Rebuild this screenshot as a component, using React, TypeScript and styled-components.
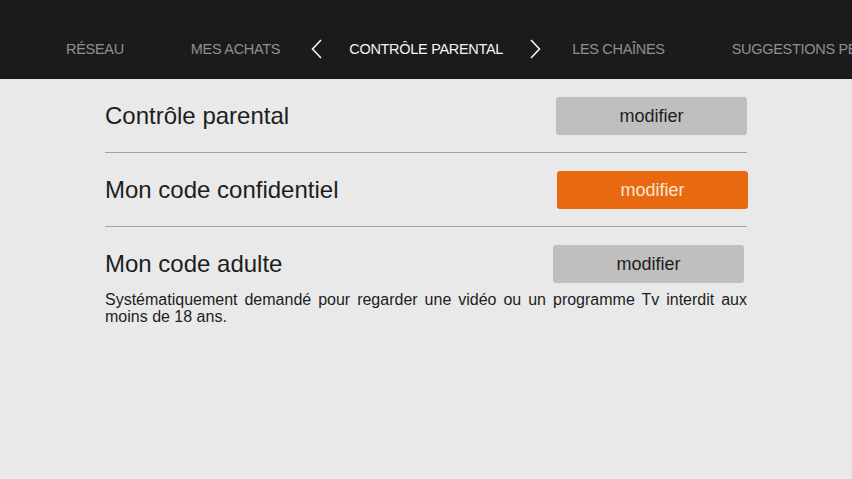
import React from 'react';
import styled, { createGlobalStyle } from 'styled-components';

const GlobalStyle = createGlobalStyle`
  html, body {
    margin: 0;
    padding: 0;
    background: #e9e9e9;
    font-family: "Liberation Sans", Arial, sans-serif;
  }
`;

const Page = styled.div`
  width: 852px;
  height: 479px;
  overflow: hidden;
  background: #e9e9e9;
`;

const TopBar = styled.nav`
  height: 79px;
  background: #1b1b1b;
  display: flex;
  align-items: center;
  gap: 67px;
  padding: 19px 0 0 66px;
  box-sizing: border-box;
  white-space: nowrap;
  overflow: hidden;
`;

const Tab = styled.span<{ $active?: boolean }>`
  font-size: 14.5px;
  letter-spacing: -0.3px;
  color: ${(p) => (p.$active ? '#f4f4f4' : '#8f8f8f')};
  flex-shrink: 0;
`;

const ActiveGroup = styled.div`
  display: flex;
  align-items: center;
  gap: 27px;
  margin: 0 -36px;
`;

const Chevron = styled.svg`
  width: 11px;
  height: 20px;
  display: block;
`;

const Content = styled.main`
  width: 642px;
  margin: 0 auto;
`;

const Row = styled.div<{ $last?: boolean }>`
  display: flex;
  align-items: center;
  justify-content: space-between;
  padding: ${(p) => (p.$last ? '18px 0 8px' : '18px 0 17px')};
  border-bottom: ${(p) => (p.$last ? 'none' : '1px solid #a3a3a3')};
`;

const Label = styled.span`
  font-size: 24px;
  color: #1d1d1d;
`;

const Button = styled.button<{ $primary?: boolean; $shift?: number }>`
  width: 191px;
  height: 38px;
  border: none;
  border-radius: 3px;
  font-family: inherit;
  font-size: 18px;
  margin-right: ${(p) => p.$shift ?? 0}px;
  background: ${(p) => (p.$primary ? '#e8690f' : '#bfbfbf')};
  color: ${(p) => (p.$primary ? '#fbe6d6' : '#1e1e1e')};
  cursor: pointer;
`;

const Note = styled.p`
  margin: 0;
  font-size: 16px;
  line-height: 17px;
  color: #1d1d1d;
  text-align: justify;
`;

const Left = () => (
  <Chevron viewBox="0 0 11 20">
    <path d="M10 1 L1.5 10 L10 19" fill="none" stroke="#f4f4f4" strokeWidth="1.6" />
  </Chevron>
);

const Right = () => (
  <Chevron viewBox="0 0 11 20">
    <path d="M1 1 L9.5 10 L1 19" fill="none" stroke="#f4f4f4" strokeWidth="1.6" />
  </Chevron>
);

const App = () => {
  return (
    <Page>
      <GlobalStyle />
      <TopBar>
        <Tab>RÉSEAU</Tab>
        <Tab>MES ACHATS</Tab>
        <ActiveGroup>
          <Left />
          <Tab $active>CONTRÔLE PARENTAL</Tab>
          <Right />
        </ActiveGroup>
        <Tab>LES CHAÎNES</Tab>
        <Tab>SUGGESTIONS PERSONNALISÉES</Tab>
      </TopBar>
      <Content>
        <Row>
          <Label>Contrôle parental</Label>
          <Button>modifier</Button>
        </Row>
        <Row>
          <Label>Mon code confidentiel</Label>
          <Button $primary $shift={-1}>modifier</Button>
        </Row>
        <Row $last>
          <Label>Mon code adulte</Label>
          <Button $shift={3}>modifier</Button>
        </Row>
        <Note>
          Systématiquement demandé pour regarder une vidéo ou un programme Tv interdit aux moins de 18 ans.
        </Note>
      </Content>
    </Page>
  );
};

export default App;
